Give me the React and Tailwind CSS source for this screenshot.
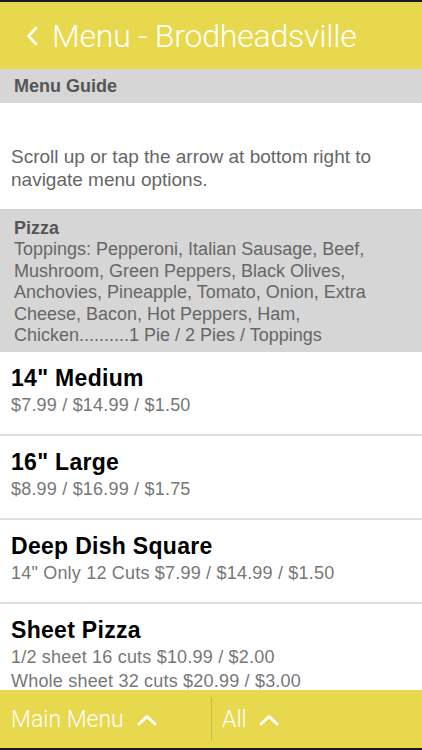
import React from 'react';

const items = [
  { name: '14" Medium', lines: ['$7.99 / $14.99 / $1.50'] },
  { name: '16" Large', lines: ['$8.99 / $16.99 / $1.75'] },
  { name: 'Deep Dish Square', lines: ['14" Only 12 Cuts $7.99 / $14.99 / $1.50'] },
  {
    name: 'Sheet Pizza',
    lines: ['1/2 sheet 16 cuts $10.99 / $2.00', 'Whole sheet 32 cuts $20.99 / $3.00'],
  },
];

function ChevronUp() {
  return (
    <svg width="20" height="12" viewBox="0 0 20 12" fill="none">
      <path d="M2 10 L10 2.5 L18 10" stroke="white" strokeWidth="3" strokeLinecap="round" strokeLinejoin="round" />
    </svg>
  );
}

export default function App() {
  return (
    <div
      className="w-[422px] h-[750px] flex flex-col bg-white overflow-hidden"
      style={{ fontFamily: '"Liberation Sans", Arial, sans-serif' }}
    >
      <div className="h-[2px] bg-[#1a1a1a]" />
      <header className="h-[67px] bg-[#e8d84e] flex items-center pl-[25px] shrink-0">
        <svg width="14" height="22" viewBox="0 0 14 22" fill="none" className="mr-[13px] mt-[1px]">
          <path d="M11 3 L3.5 11 L11 19" stroke="white" strokeWidth="2.6" strokeLinecap="round" strokeLinejoin="round" />
        </svg>
        <h1
          className="text-white text-[32px] font-light tracking-[-0.2px]"
          style={{ fontFamily: 'Roboto, "Liberation Sans", sans-serif' }}
        >
          Menu - Brodheadsville
        </h1>
      </header>

      <div className="h-[34px] bg-[#d6d6d6] flex items-center px-[14px] shrink-0">
        <span className="text-[18px] font-bold text-[#555]">Menu Guide</span>
      </div>

      <div className="h-[106px] px-[11px] pt-[42px] shrink-0">
        <p className="text-[19px] leading-[23px] text-[#666]">
          Scroll up or tap the arrow at bottom right to navigate menu options.
        </p>
      </div>

      <div className="h-[143px] bg-[#d6d6d6] border-t border-[#cfcfcf] px-[14px] pt-[8px] shrink-0">
        <div className="text-[18px] font-bold text-[#555] leading-[21px]">Pizza</div>
        <p className="text-[18px] leading-[21.5px] text-[#666] pr-[20px]">
          Toppings: Pepperoni, Italian Sausage, Beef, Mushroom, Green Peppers, Black Olives, Anchovies,
          Pineapple, Tomato, Onion, Extra Cheese, Bacon, Hot Peppers, Ham, Chicken..........1 Pie / 2 Pies /
          Toppings
        </p>
      </div>

      <div className="flex-1 overflow-hidden">
        {items.map((item, i) => (
          <div
            key={item.name}
            className={`px-[11px] pt-[12px] ${i < items.length - 1 ? 'h-[84px] border-b-2 border-[#e0e0e0]' : ''}`}
          >
            <div className="text-[23px] font-bold text-black leading-[28px] tracking-[0.3px]">{item.name}</div>
            {item.lines.map((l) => (
              <div key={l} className="text-[18px] text-[#777] leading-[22px] mt-[2px] tracking-[0.2px]">
                {l}
              </div>
            ))}
          </div>
        ))}
      </div>

      <footer className="h-[58px] bg-[#e8d84e] flex items-center shrink-0">
        <div className="w-[211px] flex items-center pl-[11px] gap-[13px] mt-[2px]">
          <span
            className="text-white text-[23px] font-light"
            style={{ fontFamily: 'Roboto, "Liberation Sans", sans-serif' }}
          >
            Main Menu
          </span>
          <ChevronUp />
        </div>
        <div className="w-[1px] h-[44px] bg-[#c9bb3e]" />
        <div className="flex items-center pl-[10px] gap-[12px] mt-[2px]">
          <span
            className="text-white text-[23px] font-light"
            style={{ fontFamily: 'Roboto, "Liberation Sans", sans-serif' }}
          >
            All
          </span>
          <ChevronUp />
        </div>
      </footer>
      <div className="h-[2px] bg-[#1a1a1a] shrink-0" />
    </div>
  );
}
